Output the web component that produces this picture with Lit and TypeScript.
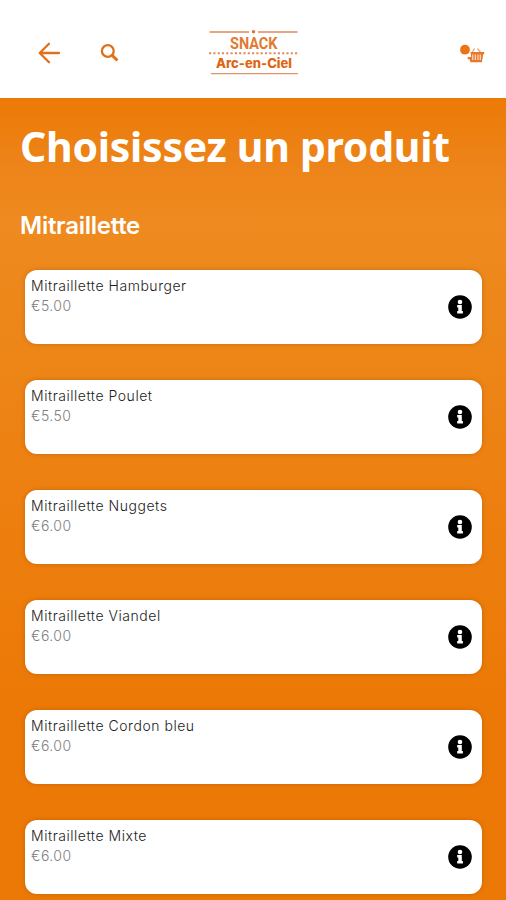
import { LitElement, html, css } from "lit";
import { customElement, property } from "lit/decorators.js";

interface Product {
  name: string;
  price: string;
}

const PRODUCTS: Product[] = [
  { name: "Mitraillette Hamburger", price: "€5.00" },
  { name: "Mitraillette Poulet", price: "€5.50" },
  { name: "Mitraillette Nuggets", price: "€6.00" },
  { name: "Mitraillette Viandel", price: "€6.00" },
  { name: "Mitraillette Cordon bleu", price: "€6.00" },
  { name: "Mitraillette Mixte", price: "€6.00" },
];

@customElement("product-card")
export class ProductCard extends LitElement {
  @property() name = "";
  @property() price = "";

  static styles = css`
    :host {
      display: flex;
      align-items: center;
      justify-content: space-between;
      box-sizing: border-box;
      height: 74px;
      padding: 0 10px 0 6px;
      border-radius: 12px;
      background: #fff;
      box-shadow: 0 0 4px rgba(130, 60, 0, 0.35);
      font-family: Inter, "Liberation Sans", sans-serif;
      font-weight: 300;
    }
    .text {
      align-self: flex-start;
      padding-top: 6px;
    }
    .name,
    .price {
      font-size: 14px;
      line-height: 20px;
      white-space: nowrap;
    }
    .name {
      color: #1c1c1c;
      letter-spacing: 0.53px;
    }
    .price {
      color: #808080;
      letter-spacing: 0.45px;
    }
    .info {
      display: block;
      width: 24px;
      height: 24px;
    }
  `;

  render() {
    return html`
      <div class="text">
        <div class="name">${this.name}</div>
        <div class="price">${this.price}</div>
      </div>
      <svg class="info" viewBox="0 0 24 24">
        <circle cx="12" cy="12" r="11.8" fill="#000" />
        <circle cx="12" cy="7" r="2.3" fill="#fff" />
        <path d="M9.2 10h4.6v6.100h1.100v2.500H9.200v-2.500h1.100v-3.700H9.200z" fill="#fff" />
      </svg>
    `;
  }
}

@customElement("app-root")
export class AppRoot extends LitElement {
  static styles = css`
    :host {
      display: flex;
      flex-direction: column;
      height: 900px;
      overflow: hidden;
      background: #fff;
    }
    .header {
      flex: none;
      display: grid;
      grid-template-columns: 1fr auto 1fr;
      align-items: center;
      box-sizing: border-box;
      height: 98px;
      padding: 7px 21px 0 38px;
      color: #e0701a;
    }
    .left {
      display: flex;
      align-items: center;
      gap: 39px;
    }
    .logo {
      margin-left: -15px;
    }
    .basket {
      justify-self: end;
    }
    svg {
      display: block;
    }
    .snack {
      font: 700 17px "Roboto", sans-serif;
      fill: #e07a35;
    }
    .arc {
      font: 800 13px Inter, sans-serif;
      fill: #e0640f;
    }
    .content {
      flex: 1;
      padding: 0 24px 0 25px;
      background: linear-gradient(
        #ec7a06 0,
        #ed841a 70px,
        #ee8a1f 125px,
        #ed8618 240px,
        #ed7f0f 420px,
        #ec7906 600px,
        #ec7906 100%
      );
    }
    .title {
      margin: 0 0 0 -5px;
      padding-top: 20px;
      font: 700 41px/56px "Noto Sans", "Open Sans", sans-serif;
      letter-spacing: -0.27px;
      color: #fff;
      white-space: nowrap;
    }
    .section {
      margin: 36px 0 0 -5px;
      font: 600 24px/32px Inter, sans-serif;
      letter-spacing: -0.26px;
      color: #fff;
    }
    .list {
      display: grid;
      gap: 36px;
      margin-top: 28px;
    }
  `;

  render() {
    return html`
      <header class="header">
        <div class="left">
          <svg width="23" height="22" viewBox="0 0 23 22" fill="none" stroke="currentColor" stroke-width="2.300" stroke-linecap="round" stroke-linejoin="round">
            <path d="M11 1.800 1.700 11l9.300 9.200M1.800 11H21" />
          </svg>
          <svg width="20" height="20" viewBox="0 0 20 20" fill="none" stroke="currentColor">
            <circle cx="7.800" cy="8" r="5.900" stroke-width="2.300" />
            <path d="m12.200 12.400 5.200 5.100" stroke-width="2.900" />
          </svg>
        </div>
        <svg class="logo" width="92" height="48" viewBox="208 29 92 48">
          <path d="M209.500 32h39.500M258 32h39.500" stroke="#e8a583" stroke-width="1.800" />
          <circle cx="253.500" cy="31.800" r="1.700" fill="#df7038" />
          <text class="snack" x="230" y="49.300" textLength="47.500" lengthAdjust="spacingAndGlyphs">SNACK</text>
          <path d="M209 53.300h90" stroke="#e38c60" stroke-width="2" stroke-dasharray="2.200 2.100" />
          <text class="arc" x="216" y="68.200" textLength="76" lengthAdjust="spacingAndGlyphs">Arc-en-Ciel</text>
          <path d="M211 73.600h87" stroke="#e39568" stroke-width="1.400" />
        </svg>
        <svg class="basket" width="26" height="20" viewBox="459 43 26 20">
          <circle cx="465" cy="49.700" r="4.900" fill="#ec7416" />
          <path d="m472.500 52 2-3.500m3 0 3.500 4.500" stroke="#e9a77b" stroke-width="1.300" fill="none" />
          <path d="M470.500 52h13.700v2.200h-1l-1.300 8h-11.400l-1-3h-1.800v-2.200h3.500z" fill="#e9782a" />
          <path d="M472.800 54.500v5.500M475.400 54.500v5.500M478 54.500v5.500M480.300 54.500v5.500" stroke="#fbe0cf" stroke-width="1.200" />
        </svg>
      </header>
      <main class="content">
        <h1 class="title">Choisissez un produit</h1>
        <h2 class="section">Mitraillette</h2>
        <div class="list">
          ${PRODUCTS.map((p) => html`<product-card .name=${p.name} .price=${p.price}></product-card>`)}
        </div>
      </main>
    `;
  }
}
